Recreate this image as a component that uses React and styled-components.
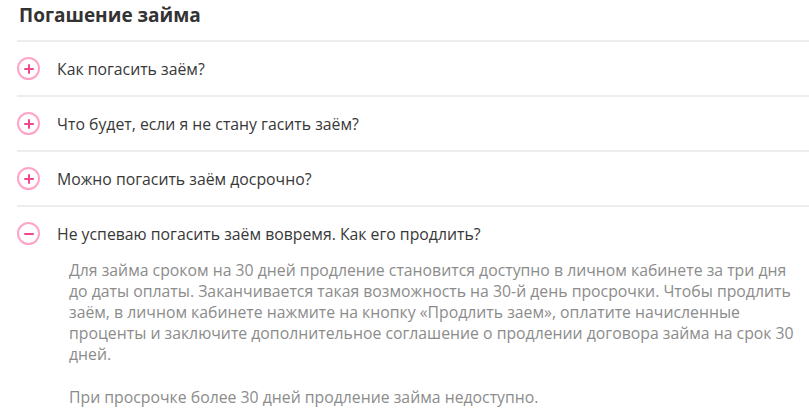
import React, { useState } from 'react';
import styled, { createGlobalStyle } from 'styled-components';

const GlobalStyle = createGlobalStyle`
  body {
    margin: 0;
    background: #fff;
    font-family: "Open Sans", "Noto Sans", sans-serif;
  }
`;

const Section = styled.section`
  padding: 0 0 0 17px;
`;

const Title = styled.h2`
  margin: 0 0 10px 2px;
  font-size: 19px;
  line-height: 30px;
  font-weight: 700;
  color: #333;
`;

const Item = styled.div`
  border-top: 2px solid #ededed;
`;

const Question = styled.button`
  display: flex;
  align-items: center;
  gap: 17px;
  width: 100%;
  height: 53px;
  padding: 0;
  border: none;
  background: none;
  font-family: inherit;
  font-size: 15.8px;
  color: #383838;
  text-align: left;
  cursor: pointer;
`;

const Toggle = styled.span`
  position: relative;
  flex: none;
  width: 23px;
  height: 23px;
  box-sizing: border-box;
  border: 2px solid #ffa3c9;
  border-radius: 50%;

  &:before,
  &:after {
    content: '';
    position: absolute;
    left: 50%;
    top: 50%;
    background: #f0468e;
    border-radius: 1px;
  }

  &:before {
    width: 10px;
    height: 2px;
    transform: translate(-50%, -50%);
  }

  &:after {
    display: ${({ open }) => (open ? 'none' : 'block')};
    width: 2px;
    height: 10px;
    transform: translate(-50%, -50%);
  }
`;

const Answer = styled.div`
  padding: 0 0 0 52px;
  max-width: 736px;
  font-size: 15.8px;
  line-height: 21px;
  color: #8c8c8c;

  p {
    margin: 0 0 22px;
  }
`;

const faq = [
  { q: 'Как погасить заём?', a: [] },
  { q: 'Что будет, если я не стану гасить заём?', a: [] },
  { q: 'Можно погасить заём досрочно?', a: [] },
  {
    q: 'Не успеваю погасить заём вовремя. Как его продлить?',
    a: [
      'Для займа сроком на 30 дней продление становится доступно в личном кабинете за три дня до даты оплаты. Заканчивается такая возможность на 30-й день просрочки. Чтобы продлить заём, в личном кабинете нажмите на кнопку «Продлить заем», оплатите начисленные проценты и заключите дополнительное соглашение о продлении договора займа на срок 30 дней.',
      'При просрочке более 30 дней продление займа недоступно.',
    ],
  },
];

export default function App() {
  const [open, setOpen] = useState(3);

  return (
    <>
      <GlobalStyle />
      <Section>
        <Title>Погашение займа</Title>
        {faq.map((item, i) => (
          <Item key={item.q}>
            <Question onClick={() => setOpen(open === i ? -1 : i)}>
              <Toggle open={open === i} />
              {item.q}
            </Question>
            {open === i && (
              <Answer>
                {item.a.map((p) => (
                  <p key={p}>{p}</p>
                ))}
              </Answer>
            )}
          </Item>
        ))}
      </Section>
    </>
  );
}
